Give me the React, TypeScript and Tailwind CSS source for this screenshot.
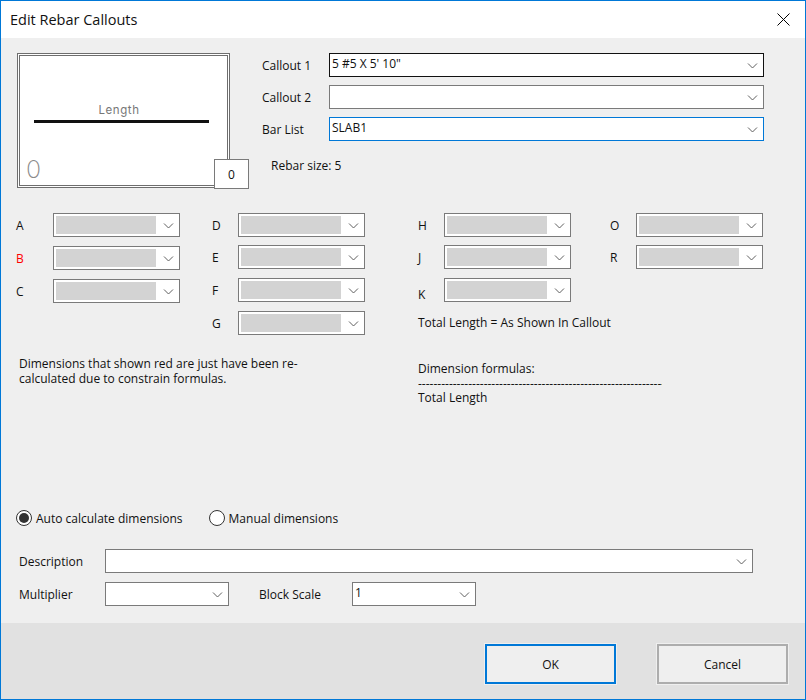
import React from "react";

const Chevron = () => (
  <svg width="11" height="7" viewBox="0 0 11 7" className="shrink-0 text-[#606060]">
    <path d="M1 1.5 L5.5 6 L10 1.5" fill="none" stroke="currentColor" strokeWidth="1" />
  </svg>
);

type ComboProps = {
  width: string;
  value?: string;
  border?: string;
  disabled?: boolean;
};

const Combo = ({ width, value, border = "border-[#7a7a7a]", disabled }: ComboProps) => (
  <div className={`${width} h-6 shrink-0 flex items-center justify-between border bg-white pl-[2px] pr-[5px] ${border}`}>
    {disabled ? (
      <div className="w-[100px] h-[18px] bg-[#d3d3d3]" />
    ) : (
      <span className="leading-[20px] -mt-[3px]">{value}</span>
    )}
    <Chevron />
  </div>
);

const DimRow = ({
  label,
  labelWidth,
  spacing = "",
  labelClass = "",
}: {
  label: string;
  labelWidth: string;
  spacing?: string;
  labelClass?: string;
}) => (
  <div className={`flex items-center ${spacing}`}>
    <span className={`${labelWidth} ${labelClass}`}>{label}</span>
    <Combo width="w-[127px]" disabled />
  </div>
);

const Radio = ({ checked, label }: { checked?: boolean; label: string }) => (
  <div className="flex items-center gap-[4px]">
    <span className="w-4 h-4 rounded-full border border-[#333333] bg-white flex items-center justify-center">
      {checked && <span className="w-[10px] h-[10px] rounded-full bg-[#333333]" />}
    </span>
    <span>{label}</span>
  </div>
);

export default function App() {
  return (
    <div className="w-[806px] h-[700px] flex flex-col border border-[#0078d7] bg-white text-[12px] leading-[15px] text-[#111111] font-['Open_Sans','Liberation_Sans',sans-serif]">
      {/* title bar */}
      <div className="h-[37px] shrink-0 flex items-center justify-between pl-[9px] pr-[15px]">
        <span className="text-[14.5px]">Edit Rebar Callouts</span>
        <svg width="13" height="13" viewBox="0 0 13 13">
          <path d="M0.5 0.5 L12.5 12.5 M12.5 0.5 L0.5 12.5" stroke="#000" strokeWidth="1" fill="none" />
        </svg>
      </div>

      <div className="flex-1 flex flex-col bg-[#efefef]">
        {/* preview and callouts */}
        <div className="flex pt-[15px] pl-[16px]">
          <div className="relative w-[213px] h-[135px] shrink-0 border-[3px] border-double border-[#6e6e6e] bg-white">
            <svg width="207" height="129" viewBox="0 0 207 129">
              <text x="99" y="58" textAnchor="middle" fontSize="11.5" letterSpacing="0.6" fill="#777777" fontFamily="Inter, sans-serif">
                Length
              </text>
              <rect x="14" y="64" width="175" height="3" fill="#111111" />
              <text x="6" y="122" fontSize="25" fontWeight="200" fill="#8a8a8a" fontFamily="Inter, sans-serif">
                0
              </text>
            </svg>
            <div className="absolute left-[194px] top-[103px] w-[35px] h-[30px] flex items-center justify-center border border-[#7a7a7a] bg-white">
              0
            </div>
          </div>
          <div className="ml-[32px] flex flex-col">
            <div className="flex flex-col gap-2">
              <div className="flex items-center">
                <span className="w-[67px]">Callout 1</span>
                <Combo width="w-[435px]" value={`5 #5 X 5' 10"`} border="border-[#111111]" />
              </div>
              <div className="flex items-center">
                <span className="w-[67px]">Callout 2</span>
                <Combo width="w-[435px]" />
              </div>
              <div className="flex items-center">
                <span className="w-[67px]">Bar List</span>
                <Combo width="w-[435px]" value="SLAB1" border="border-[#0078d7]" />
              </div>
            </div>
            <div className="mt-[17px] pl-[9px]">Rebar size: 5</div>
          </div>
        </div>

        {/* dimensions */}
        <div className="flex pl-[15px] mt-[25px]">
          <div className="w-[402px] shrink-0">
            <div className="flex">
              <div className="w-[196px] shrink-0">
                <DimRow label="A" labelWidth="w-[37px]" />
                <DimRow label="B" labelWidth="w-[37px]" labelClass="text-[#ff0000]" spacing="mt-[9px]" />
                <DimRow label="C" labelWidth="w-[37px]" spacing="mt-[9px]" />
              </div>
              <div>
                <DimRow label="D" labelWidth="w-[26px]" />
                <DimRow label="E" labelWidth="w-[26px]" spacing="mt-2" />
                <DimRow label="F" labelWidth="w-[26px]" spacing="mt-[9px]" />
                <DimRow label="G" labelWidth="w-[26px]" spacing="mt-[9px]" />
              </div>
            </div>
            <p className="ml-[3px] mt-[21px] w-[300px]">
              Dimensions that shown red are just have been re-calculated due to constrain formulas.
            </p>
          </div>
          <div>
            <div className="flex">
              <div className="w-[192px] shrink-0">
                <DimRow label="H" labelWidth="w-[26px]" />
                <DimRow label="J" labelWidth="w-[26px]" spacing="mt-2" />
                <DimRow label="K" labelWidth="w-[26px]" labelClass="pt-[8px]" spacing="mt-[9px]" />
              </div>
              <div>
                <DimRow label="O" labelWidth="w-[26px]" />
                <DimRow label="R" labelWidth="w-[26px]" spacing="mt-2" />
              </div>
            </div>
            <p className="mt-[13px]">Total Length = As Shown In Callout</p>
            <p className="mt-[31px]">Dimension formulas:</p>
            <p className="whitespace-nowrap overflow-hidden w-[244px] h-[14px]">
              ----------------------------------------------------------------
            </p>
            <p>Total Length</p>
          </div>
        </div>

        {/* bottom options */}
        <div className="mt-auto pb-[17px]">
          <div className="flex pl-[15px] gap-[26px]">
            <Radio checked label="Auto calculate dimensions" />
            <Radio label="Manual dimensions" />
          </div>
          <div className="flex items-center pl-[18px] mt-[23px]">
            <span className="w-[86px]">Description</span>
            <Combo width="w-[648px]" />
          </div>
          <div className="flex items-center pl-[18px] mt-[9px]">
            <span className="w-[86px]">Multiplier</span>
            <Combo width="w-[124px]" />
            <span className="ml-[30px] w-[93px]">Block Scale</span>
            <Combo width="w-[124px]" value="1" />
          </div>
        </div>
      </div>

      {/* footer */}
      <div className="h-[76px] shrink-0 bg-[#e1e1e1] flex justify-end gap-[41px] pt-[21px] pr-[17px]">
        <button className="w-[131px] h-[40px] border-[2px] border-[#0078d7] bg-[#efefef] outline outline-1 -outline-offset-0 outline-[#efefef]">
          OK
        </button>
        <button className="w-[131px] h-[40px] border-[2px] border-[#adadad] bg-[#efefef] outline outline-1 outline-[#efefef]">
          Cancel
        </button>
      </div>
    </div>
  );
}
